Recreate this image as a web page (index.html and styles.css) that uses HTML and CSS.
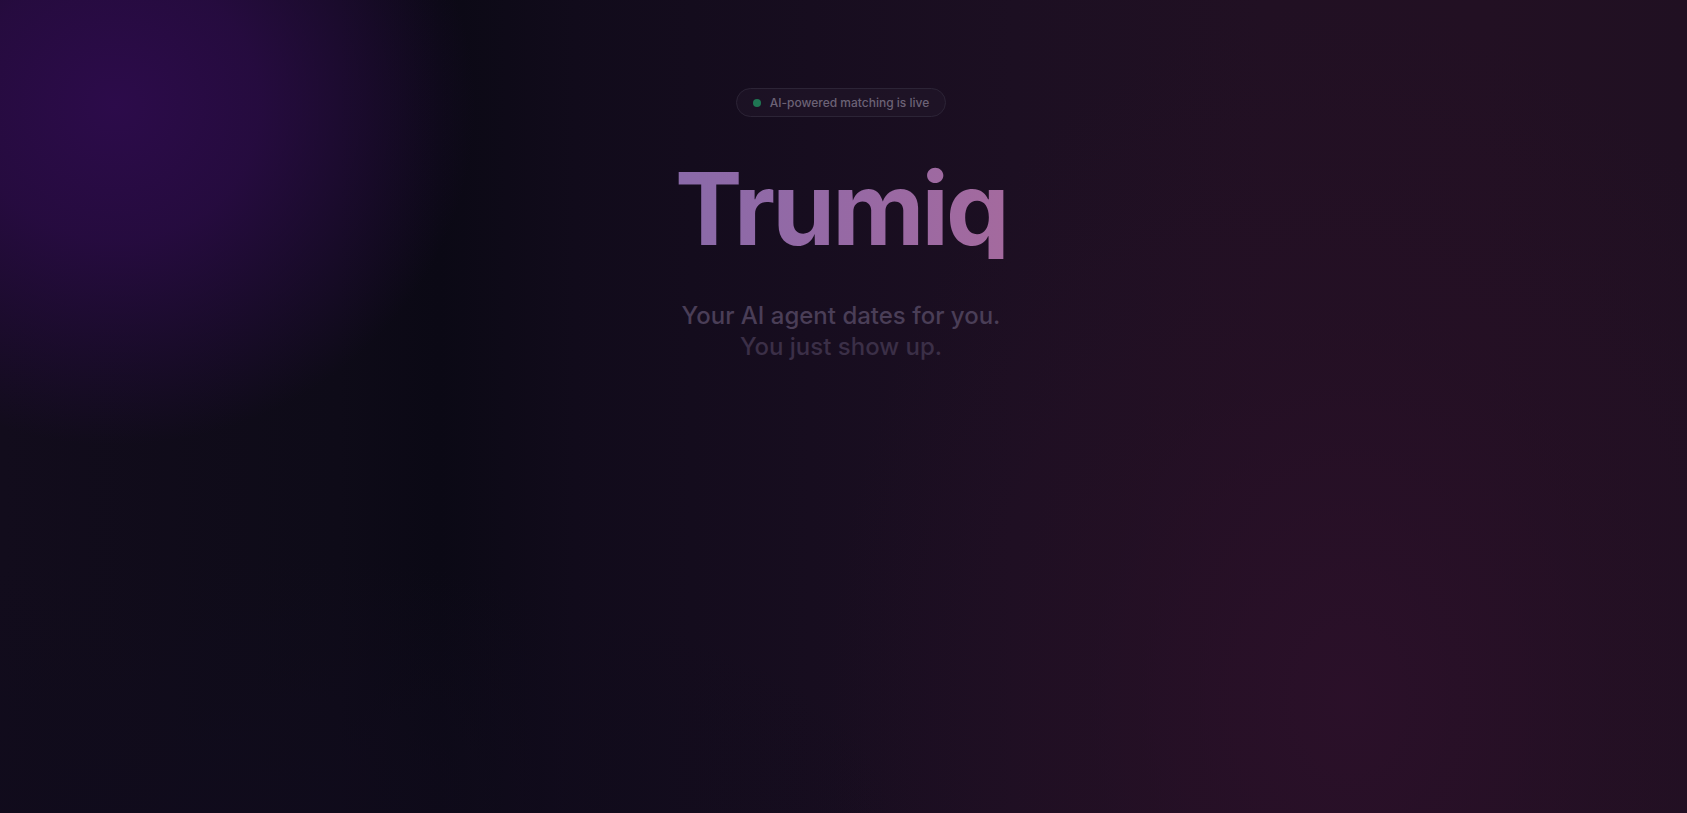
FILE: index.html
```html
<!DOCTYPE html>
<html lang="en">
<head>
<meta charset="utf-8">
<title>Trumiq</title>
<link rel="stylesheet" href="styles.css">
</head>
<body>
<main class="page">
  <section class="hero">
    <div class="badge"><span class="badge-dot"></span><span class="badge-text">AI-powered matching is live</span></div>
    <h1 class="title">Trumiq</h1>
    <p class="subtitle"><span class="line-one">Your AI agent dates for you.</span><span class="line-two">You just show up.</span></p>
  </section>
  <section class="below"></section>
</main>
</body>
</html>
```
FILE: styles.css
```css
html {
  background: #130c1c;
}
html::-webkit-scrollbar {
  width: 9px;
  background: #0c0b13;
}
html::-webkit-scrollbar-thumb {
  background: #2a2736;
  border-left: 2px solid #0c0b13;
  border-right: 1px solid #0c0b13;
  background-clip: padding-box;
}
body {
  margin: 0;
  font-family: Inter, "Noto Sans", sans-serif;
  color: #6f6479;
  min-height: 3535px;
  background:
    radial-gradient(ellipse 360px 340px at 115px 105px, rgba(44,11,74,1) 0%, rgba(43,11,72,0.8) 40%, rgba(40,11,66,0) 100%),
    radial-gradient(ellipse 520px 700px at 1350px 700px, rgba(44,16,42,0.85) 0%, rgba(40,15,38,0.4) 50%, rgba(40,15,38,0) 100%),
    radial-gradient(ellipse 700px 260px at 200px 813px, rgba(16,11,28,0.9) 0%, rgba(16,11,28,0) 100%),
    linear-gradient(90deg, #120c1c 0%, #0e0b18 20%, #0b0915 26%, #110b1b 34%, #170d1f 48%, #1c0f22 60%, #211023 75%, #221023 88%, #201022 100%);
  background-attachment: fixed;
  background-color: #130c1c;
}
.page {
  display: flex;
  flex-direction: column;
  align-items: center;
}
.hero {
  display: flex;
  flex-direction: column;
  align-items: center;
  padding-top: 88px;
  padding-right: 5px;
}
.badge {
  display: flex;
  align-items: center;
  gap: 9px;
  height: 27px;
  padding: 0 16px;
  border: 1px solid #2c2436;
  border-radius: 999px;
  background: rgba(40,30,50,0.35);
  font-size: 12px;
  font-weight: 500;
  color: #6c6276;
}
.badge-dot {
  width: 8px;
  height: 8px;
  border-radius: 50%;
  background: #1f7653;
}
.title {
  margin: 41px 0 0;
  font-size: 101px;
  line-height: 1;
  font-weight: 700;
  letter-spacing: -0.028em;
  background: linear-gradient(90deg, #8a6aa9 0%, #9769a4 55%, #a46a9e 100%);
  -webkit-background-clip: text;
  background-clip: text;
  color: transparent;
}
.subtitle {
  margin: 41px 0 0;
  display: flex;
  flex-direction: column;
  align-items: center;
  font-size: 24px;
  line-height: 31px;
  font-weight: 500;
}
.line-one {
  color: #4a3e57;
}
.line-two {
  color: #3b2f47;
}
.below {
  height: 2400px;
}
```
